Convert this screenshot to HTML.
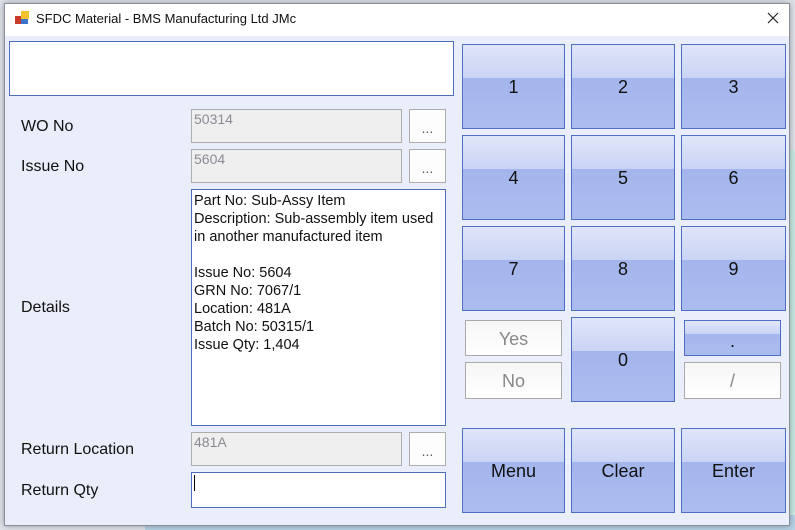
<!DOCTYPE html>
<html><head><meta charset="utf-8"><style>
*{box-sizing:border-box;margin:0;padding:0}
body{width:795px;height:530px;overflow:hidden;background:#e9edf3;font-family:"Liberation Sans",Arial,sans-serif;position:relative}
.abs{position:absolute}
.win{left:4px;top:3px;width:786px;height:523px;background:#eaeefa;border:1px solid #8a8f99;box-shadow:0 0 6px rgba(0,0,0,.35)}
.title{left:5px;top:4px;width:784px;height:32px;background:#fff}
.lbl{font-size:16px;color:#111}
.tb{border:1px solid #adadad;background:#efefef;color:#8a8a95;font-size:14px;padding:1px 0 0 2px}
.dots{border:1px solid #adadad;background:#fdfdfd;color:#555;font-size:14px;text-align:center;line-height:36px}
.btn{border:1px solid #4f70c2;background:linear-gradient(#e0e6f9,#c9d3f4 40%,#a3b5ec 40%,#abbdef);text-align:center;font-size:18px;color:#111}
.wb{border:1px solid #aaa;background:linear-gradient(#f6f6f6,#fff);text-align:center;font-size:18px;color:#888}
</style></head><body>
<div class="abs" style="left:0;top:0;width:795px;height:530px;background:#dfe3ea"></div>
<div class="abs" style="left:788px;top:150px;width:7px;height:375px;background:#c9ece4"></div>
<div class="abs" style="left:145px;top:515px;width:650px;height:15px;background:#b7d2e6"></div>
<div class="abs win"></div>
<div class="abs title"></div>
<svg class="abs" style="left:15px;top:11px" width="14" height="14"><rect x="0" y="5" width="7" height="8" fill="#c83a2a"/><rect x="6" y="0" width="8" height="8" fill="#f2c12e"/><rect x="6" y="8" width="7" height="5" fill="#3a73c9"/></svg>
<div class="abs" style="left:36px;top:11px;font-size:13px;color:#111">SFDC Material - BMS Manufacturing Ltd JMc</div>
<svg class="abs" style="left:767px;top:12px" width="12" height="12"><path d="M1 1L11 11M11 1L1 11" stroke="#222" stroke-width="1.2"/></svg>

<div class="abs" style="left:9px;top:41px;width:445px;height:55px;background:#fff;border:1px solid #4d6fb9"></div>

<div class="abs lbl" style="left:21px;top:118px">WO No</div>
<div class="abs tb" style="left:191px;top:109px;width:211px;height:34px">50314</div>
<div class="abs dots" style="left:409px;top:109px;width:37px;height:34px">...</div>

<div class="abs lbl" style="left:21px;top:158px">Issue No</div>
<div class="abs tb" style="left:191px;top:149px;width:211px;height:34px">5604</div>
<div class="abs dots" style="left:409px;top:149px;width:37px;height:34px">...</div>

<div class="abs lbl" style="left:21px;top:299px">Details</div>
<div class="abs" style="left:191px;top:189px;width:255px;height:237px;background:#fff;border:1px solid #4d6fb9;font-size:14.5px;white-space:nowrap;overflow:hidden;line-height:18px;padding:2px 0 0 2px;color:#111">Part No: Sub-Assy Item<br>Description: Sub-assembly item used<br>in another manufactured item<br><br>Issue No: 5604<br>GRN No: 7067/1<br>Location: 481A<br>Batch No: 50315/1<br>Issue Qty: 1,404</div>

<div class="abs lbl" style="left:21px;top:441px">Return Location</div>
<div class="abs tb" style="left:191px;top:432px;width:211px;height:34px">481A</div>
<div class="abs dots" style="left:409px;top:432px;width:37px;height:34px">...</div>

<div class="abs lbl" style="left:21px;top:482px">Return Qty</div>
<div class="abs" style="left:191px;top:472px;width:255px;height:36px;background:#fff;border:1px solid #4d6fb9"></div>
<div class="abs" style="left:194px;top:475px;width:1px;height:16px;background:#000"></div>

<div class="abs btn" style="left:462px;top:44px;width:103px;height:85px;line-height:84px">1</div>
<div class="abs btn" style="left:571px;top:44px;width:104px;height:85px;line-height:84px">2</div>
<div class="abs btn" style="left:681px;top:44px;width:105px;height:85px;line-height:84px">3</div>
<div class="abs btn" style="left:462px;top:135px;width:103px;height:85px;line-height:84px">4</div>
<div class="abs btn" style="left:571px;top:135px;width:104px;height:85px;line-height:84px">5</div>
<div class="abs btn" style="left:681px;top:135px;width:105px;height:85px;line-height:84px">6</div>
<div class="abs btn" style="left:462px;top:226px;width:103px;height:85px;line-height:84px">7</div>
<div class="abs btn" style="left:571px;top:226px;width:104px;height:85px;line-height:84px">8</div>
<div class="abs btn" style="left:681px;top:226px;width:105px;height:85px;line-height:84px">9</div>
<div class="abs wb" style="left:465px;top:320px;width:97px;height:36px;line-height:36px">Yes</div>
<div class="abs wb" style="left:465px;top:362px;width:97px;height:37px;line-height:37px">No</div>
<div class="abs btn" style="left:571px;top:317px;width:104px;height:85px;line-height:84px">0</div>
<div class="abs btn" style="left:684px;top:320px;width:97px;height:36px;line-height:40px;background:linear-gradient(#e0e6f9,#c9d3f4 38%,#a3b5ec 38%,#abbdef)">.</div>
<div class="abs wb" style="left:684px;top:362px;width:97px;height:37px;line-height:37px">/</div>
<div class="abs btn" style="left:462px;top:428px;width:103px;height:85px;line-height:84px">Menu</div>
<div class="abs btn" style="left:571px;top:428px;width:104px;height:85px;line-height:84px">Clear</div>
<div class="abs btn" style="left:681px;top:428px;width:105px;height:85px;line-height:84px">Enter</div>
</body></html>
